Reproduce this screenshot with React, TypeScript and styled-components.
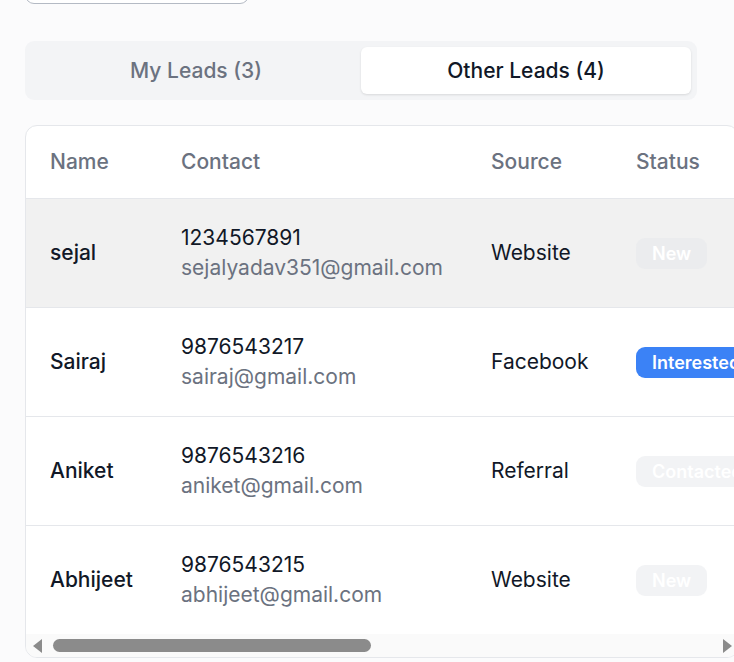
import React from "react";
import styled, { createGlobalStyle } from "styled-components";

const GlobalStyle = createGlobalStyle`
  html, body {
    margin: 0;
    padding: 0;
    background: #fbfbfc;
    overflow: hidden;
  }
  body {
    font-family: Inter, "Noto Sans", Arial, sans-serif;
    -webkit-font-smoothing: antialiased;
  }
  * { box-sizing: border-box; }
`;

const Page = styled.div`
  padding-left: 25px;
  width: 760px;
`;

const FilterBox = styled.div`
  width: 224px;
  height: 44px;
  margin-top: -40px;
  border: 1px solid #b4bac4;
  border-radius: 9px;
  background: #ffffff;
`;

const Tabs = styled.div`
  margin-top: 37px;
  width: 672px;
  height: 59px;
  padding: 6px;
  background: #f3f4f6;
  border-radius: 9px;
  display: grid;
  grid-template-columns: 1fr 1fr;
`;

const Tab = styled.div<{ $active?: boolean }>`
  display: flex;
  align-items: center;
  justify-content: center;
  font-size: 21px;
  line-height: 30px;
  font-weight: 500;
  border-radius: 6px;
  color: ${(p) => (p.$active ? "#111827" : "#6b7280")};
  background: ${(p) => (p.$active ? "#ffffff" : "transparent")};
  box-shadow: ${(p) =>
    p.$active ? "0 1px 3px rgba(0,0,0,0.08), 0 1px 2px rgba(0,0,0,0.04)" : "none"};
`;

const Card = styled.div`
  margin-top: 25px;
  width: 714px;
  border: 1px solid #e5e7eb;
  border-radius: 12px;
  background: #ffffff;
  overflow: hidden;
`;

const Scroller = styled.div`
  overflow: hidden;
`;

const Grid = styled.div`
  width: 1450px;
`;

const columns = "131px 310px 145px 180px 200px 180px 304px";

const HeadRow = styled.div`
  display: grid;
  grid-template-columns: ${columns};
  border-bottom: 1px solid #e5e7eb;
`;

const HeadCell = styled.div`
  padding: 21px 24px;
  font-size: 21px;
  line-height: 30px;
  font-weight: 500;
  color: #6b7280;
  white-space: nowrap;
`;

const Row = styled.div<{ $hover?: boolean; $last?: boolean }>`
  display: grid;
  grid-template-columns: ${columns};
  background: ${(p) => (p.$hover ? "#f1f1f1" : "#ffffff")};
  border-bottom: ${(p) => (p.$last ? "none" : "1px solid #e5e7eb")};
`;

const Cell = styled.div`
  padding: 24px;
  display: flex;
  flex-direction: column;
  justify-content: center;
  font-size: 21px;
  line-height: 30px;
  color: #111827;
  white-space: nowrap;
`;

const NameText = styled.span`
  font-weight: 500;
  color: #111827;
`;

const Phone = styled.span`
  color: #111827;
`;

const Email = styled.span`
  color: #6b7280;
`;

const Badge = styled.span<{ $tone: "gray" | "blue" }>`
  align-self: flex-start;
  display: inline-block;
  padding: 3px 16px;
  font-size: 18px;
  line-height: 25px;
  font-weight: 600;
  border-radius: 9px;
  color: #ffffff;
  background: ${(p) =>
    p.$tone === "blue" ? "#3b82f6" : "rgba(229, 231, 235, 0.5)"};
`;

const Muted = styled.span`
  color: #6b7280;
`;

/* horizontal scrollbar drawn as a bar under the table */
const ScrollTrack = styled.div`
  display: flex;
  align-items: center;
  height: 23px;
  background: #fafafa;
`;

const ScrollArrow = styled.div<{ $dir: "left" | "right" }>`
  flex: 0 0 22px;
  height: 23px;
  display: flex;
  align-items: center;
  justify-content: center;

  &::before {
    content: "";
    width: 0;
    height: 0;
    border-top: 7px solid transparent;
    border-bottom: 7px solid transparent;
    ${(p) =>
      p.$dir === "left"
        ? "border-right: 9px solid #8b8b8b;"
        : "border-left: 9px solid #8b8b8b;"}
  }
`;

const ScrollArea = styled.div`
  flex: 1;
  height: 23px;
  display: flex;
  align-items: center;
  padding: 0 5px;
`;

const Thumb = styled.div`
  width: 318px;
  height: 13px;
  border-radius: 7px;
  background: #8b8b8b;
`;

type Lead = {
  name: string;
  phone: string;
  email: string;
  source: string;
  status: string;
  tone: "gray" | "blue";
  followUp: string;
  created: string;
};

const leads: Lead[] = [
  {
    name: "sejal",
    phone: "1234567891",
    email: "sejalyadav351@gmail.com",
    source: "Website",
    status: "New",
    tone: "gray",
    followUp: "—",
    created: "12/05/2024",
  },
  {
    name: "Sairaj",
    phone: "9876543217",
    email: "sairaj@gmail.com",
    source: "Facebook",
    status: "Interested",
    tone: "blue",
    followUp: "—",
    created: "11/05/2024",
  },
  {
    name: "Aniket",
    phone: "9876543216",
    email: "aniket@gmail.com",
    source: "Referral",
    status: "Contacted",
    tone: "gray",
    followUp: "—",
    created: "10/05/2024",
  },
  {
    name: "Abhijeet",
    phone: "9876543215",
    email: "abhijeet@gmail.com",
    source: "Website",
    status: "New",
    tone: "gray",
    followUp: "—",
    created: "09/05/2024",
  },
];

export default function App() {
  return (
    <>
      <GlobalStyle />
      <Page>
        <FilterBox />
        <Tabs>
          <Tab>My Leads (3)</Tab>
          <Tab $active>Other Leads (4)</Tab>
        </Tabs>
        <Card>
          <Scroller>
            <Grid>
              <HeadRow>
                <HeadCell>Name</HeadCell>
                <HeadCell>Contact</HeadCell>
                <HeadCell>Source</HeadCell>
                <HeadCell>Status</HeadCell>
                <HeadCell>Follow Up</HeadCell>
                <HeadCell>Created</HeadCell>
                <HeadCell>Actions</HeadCell>
              </HeadRow>
              {leads.map((l, i) => (
                <Row key={l.name} $hover={i === 0} $last={i === leads.length - 1}>
                  <Cell>
                    <NameText>{l.name}</NameText>
                  </Cell>
                  <Cell>
                    <Phone>{l.phone}</Phone>
                    <Email>{l.email}</Email>
                  </Cell>
                  <Cell>{l.source}</Cell>
                  <Cell>
                    <Badge $tone={l.tone}>{l.status}</Badge>
                  </Cell>
                  <Cell>
                    <Muted>{l.followUp}</Muted>
                  </Cell>
                  <Cell>
                    <Muted>{l.created}</Muted>
                  </Cell>
                  <Cell>
                    <Muted>View</Muted>
                  </Cell>
                </Row>
              ))}
            </Grid>
          </Scroller>
          <ScrollTrack>
            <ScrollArrow $dir="left" />
            <ScrollArea>
              <Thumb />
            </ScrollArea>
            <ScrollArrow $dir="right" />
          </ScrollTrack>
        </Card>
      </Page>
    </>
  );
}
